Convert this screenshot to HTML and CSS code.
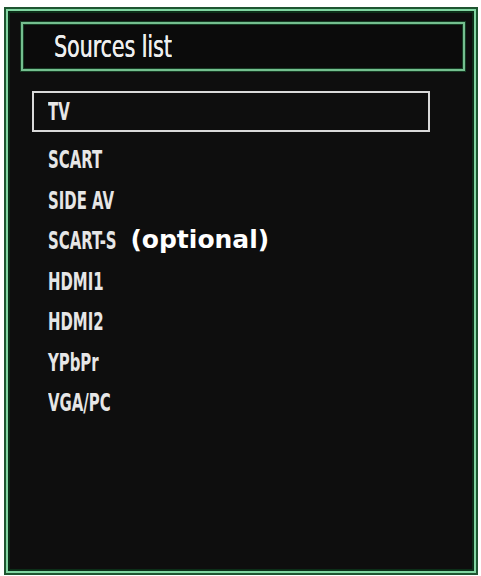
FILE: index.html
```html
<!DOCTYPE html>
<html>
<head>
<meta charset="utf-8">
<link rel="stylesheet" href="styles.css">
</head>
<body>
<div class="frame">
  <div class="title"><span class="title-text">Sources list</span></div>
  <div class="selected"><span class="label">TV</span></div>
  <ul class="list">
    <li class="row"><span class="label">SCART</span></li>
    <li class="row"><span class="label">SIDE AV</span></li>
    <li class="row"><span class="label">SCART-S</span><span class="opt">(optional)</span></li>
    <li class="row"><span class="label">HDMI1</span></li>
    <li class="row"><span class="label">HDMI2</span></li>
    <li class="row"><span class="label">YPbPr</span></li>
    <li class="row"><span class="label">VGA/PC</span></li>
  </ul>
</div>
</body>
</html>
```
FILE: styles.css
```css
html, body {
  margin: 0;
  padding: 0;
  background: #ffffff;
}
body {
  width: 481px;
  height: 576px;
  overflow: hidden;
}
.frame {
  box-sizing: border-box;
  margin: 7px 0 0 4px;
  width: 474px;
  height: 568px;
  background: #0e0e0e;
  border: 2px solid #1e5530;
  box-shadow: inset 0 0 0 2px #82d6a3, inset 0 0 0 4px #0c2e18;
  padding: 13px 0 0 15px;
  display: flex;
  flex-direction: column;
}
.title {
  box-sizing: border-box;
  width: 444px;
  height: 49px;
  border: 2px solid #74bf8f;
  box-shadow: 0 0 0 1px #163d24, inset 0 0 0 1px #163d24;
  background: #0b0b0b;
  display: flex;
  align-items: center;
  padding-left: 31px;
}
.title-text {
  display: inline-block;
  font-family: "DejaVu Sans Condensed", "DejaVu Sans", sans-serif;
  font-stretch: condensed;
  font-size: 30px;
  color: #eeeeee;
  transform: scaleX(0.76);
  transform-origin: left center;
  text-shadow: 0.4px 0 0 #eeeeee;
  margin-top: -1px;
}
.selected {
  box-sizing: border-box;
  margin: 20px 0 0 11px;
  width: 398px;
  height: 41px;
  border: 2px solid #d9d9d9;
  display: flex;
  align-items: center;
  padding-left: 14px;
}
.label {
  display: inline-block;
  font-family: "DejaVu Sans Condensed", "DejaVu Sans", sans-serif;
  font-stretch: condensed;
  font-weight: bold;
  font-size: 24px;
  color: #e6e6e6;
  transform: scaleX(0.69);
  transform-origin: left center;
}
.list {
  list-style: none;
  margin: 8px 0 0 0;
  padding: 0 0 0 27px;
}
.row {
  height: 40.5px;
  display: flex;
  align-items: center;
}
.opt {
  font-family: "DejaVu Sans", sans-serif;
  font-weight: bold;
  font-size: 25px;
  color: #ffffff;
  margin-left: -17px;
  margin-top: -4px;
}
```
